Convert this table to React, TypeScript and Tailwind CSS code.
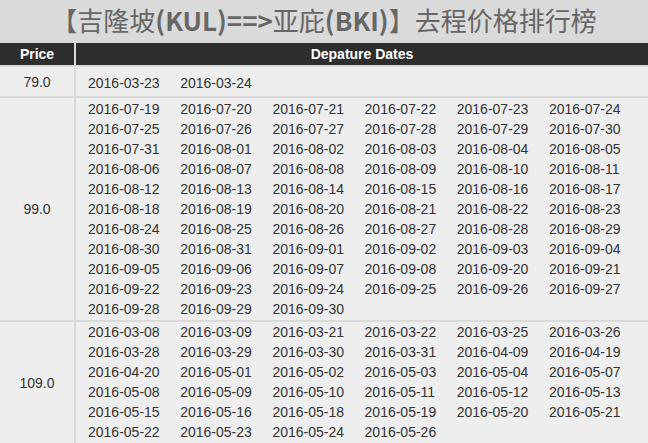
import React from "react";

type PriceRow = {
  price: string;
  dates: string[];
  className: string;
};

const rows: PriceRow[] = [
  {
    price: "79.0",
    dates: ["2016-03-23", "2016-03-24"],
    className: "pt-[6px] pb-[3px]",
  },
  {
    price: "99.0",
    dates: [
      "2016-07-19", "2016-07-20", "2016-07-21", "2016-07-22", "2016-07-23", "2016-07-24",
      "2016-07-25", "2016-07-26", "2016-07-27", "2016-07-28", "2016-07-29", "2016-07-30",
      "2016-07-31", "2016-08-01", "2016-08-02", "2016-08-03", "2016-08-04", "2016-08-05",
      "2016-08-06", "2016-08-07", "2016-08-08", "2016-08-09", "2016-08-10", "2016-08-11",
      "2016-08-12", "2016-08-13", "2016-08-14", "2016-08-15", "2016-08-16", "2016-08-17",
      "2016-08-18", "2016-08-19", "2016-08-20", "2016-08-21", "2016-08-22", "2016-08-23",
      "2016-08-24", "2016-08-25", "2016-08-26", "2016-08-27", "2016-08-28", "2016-08-29",
      "2016-08-30", "2016-08-31", "2016-09-01", "2016-09-02", "2016-09-03", "2016-09-04",
      "2016-09-05", "2016-09-06", "2016-09-07", "2016-09-08", "2016-09-20", "2016-09-21",
      "2016-09-22", "2016-09-23", "2016-09-24", "2016-09-25", "2016-09-26", "2016-09-27",
      "2016-09-28", "2016-09-29", "2016-09-30",
    ],
    className: "pt-[1px] pb-[1px]",
  },
  {
    price: "109.0",
    dates: [
      "2016-03-08", "2016-03-09", "2016-03-21", "2016-03-22", "2016-03-25", "2016-03-26",
      "2016-03-28", "2016-03-29", "2016-03-30", "2016-03-31", "2016-04-09", "2016-04-19",
      "2016-04-20", "2016-05-01", "2016-05-02", "2016-05-03", "2016-05-04", "2016-05-07",
      "2016-05-08", "2016-05-09", "2016-05-10", "2016-05-11", "2016-05-12", "2016-05-13",
      "2016-05-15", "2016-05-16", "2016-05-18", "2016-05-19", "2016-05-20", "2016-05-21",
      "2016-05-22", "2016-05-23", "2016-05-24", "2016-05-26",
    ],
    className: "pt-0 pb-[2px]",
  },
];

export default function App() {
  return (
    <div className="min-h-screen bg-[#dadada] font-['Liberation_Sans',Arial,sans-serif]">
      <h1 className="h-[43px] flex items-center justify-center pb-[4px] text-[26px] leading-none font-normal text-[#666666] font-['Noto_Sans_CJK_SC','Liberation_Sans',sans-serif]">
        【吉隆坡<b className="font-bold">(KUL)==&gt;</b>亚庇<b className="font-bold">(BKI)</b>】去程价格排行榜
      </h1>

      <div className="flex flex-col gap-[2px]">
        <div className="flex gap-[2px] h-[22px] text-white text-[14px] font-bold">
          <div className="w-[74px] bg-[#2d2d2d] flex items-center justify-center">Price</div>
          <div className="flex-1 bg-[#2d2d2d] flex items-center justify-center">Depature Dates</div>
        </div>

        {rows.map((row) => (
          <div key={row.price} className="flex gap-[2px] text-[14px] text-[#333333]">
            <div className="w-[74px] bg-[#eeeeee] flex items-center justify-center pt-[1px]">
              {row.price}
            </div>
            <div className={`flex-1 bg-[#eeeeee] pl-[12px] flex flex-wrap leading-[20px] ${row.className}`}>
              {row.dates.map((d) => (
                <span key={d} className="w-[92.2px]">
                  {d}
                </span>
              ))}
            </div>
          </div>
        ))}
      </div>
    </div>
  );
}
